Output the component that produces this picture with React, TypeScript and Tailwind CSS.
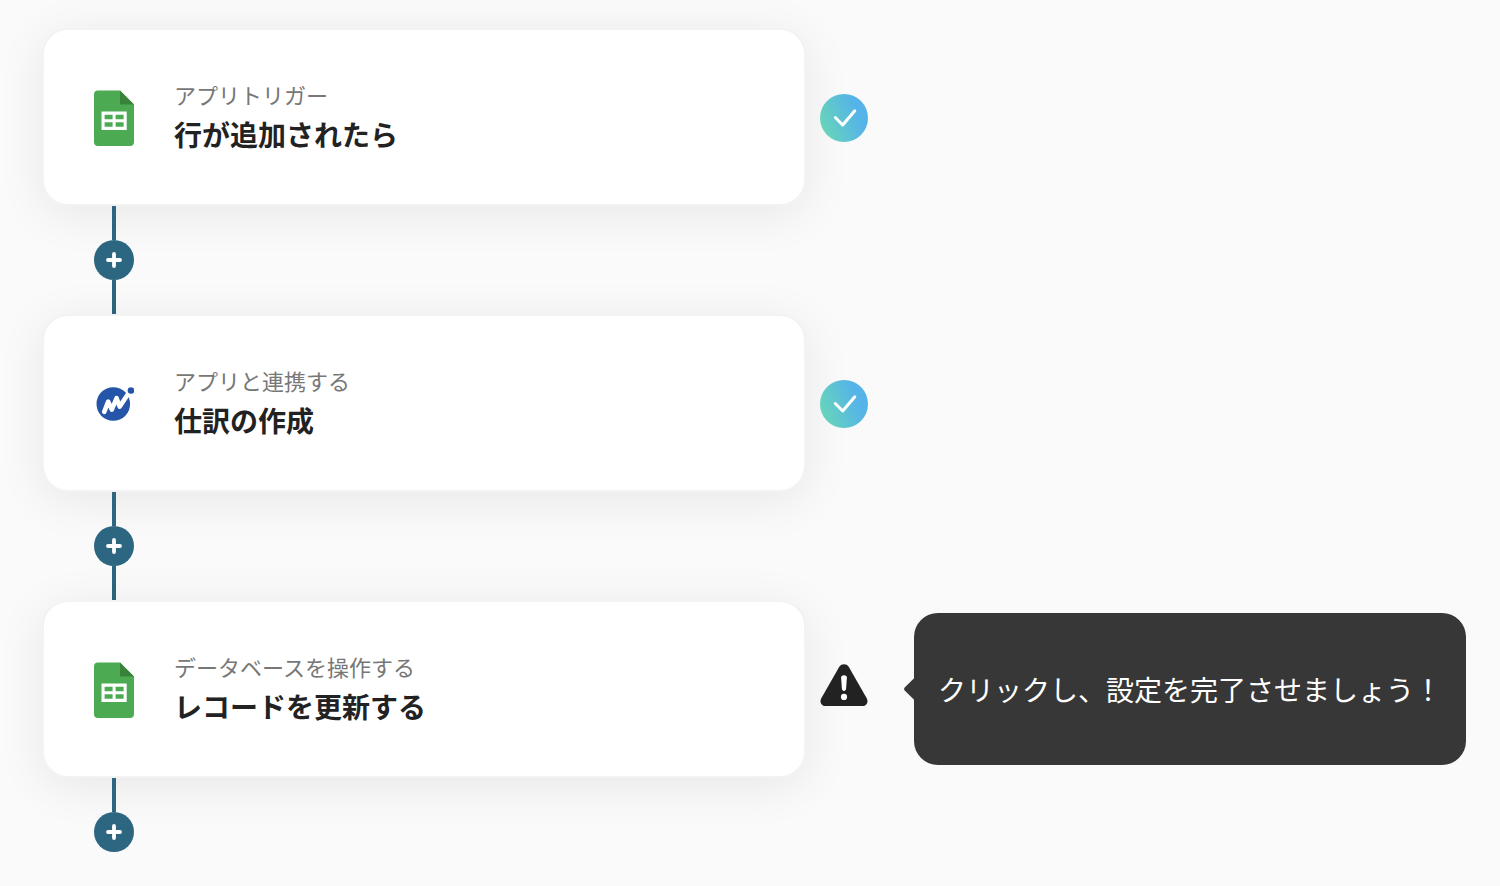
import type { ReactNode } from "react";

type Step = {
  caption: string;
  title: string;
  app: "sheets" | "moneyforward";
  done: boolean;
  hint?: string;
};

const steps: Step[] = [
  {
    caption: "アプリトリガー",
    title: "行が追加されたら",
    app: "sheets",
    done: true,
  },
  {
    caption: "アプリと連携する",
    title: "仕訳の作成",
    app: "moneyforward",
    done: true,
  },
  {
    caption: "データベースを操作する",
    title: "レコードを更新する",
    app: "sheets",
    done: false,
    hint: "クリックし、設定を完了させましょう！",
  },
];

function SheetsIcon() {
  return (
    <svg width="40" height="58" viewBox="0 0 40 58" aria-hidden="true">
      <path
        d="M4 2.500h22l14 14v37.500a4 4 0 0 1-4 4H4a4 4 0 0 1-4-4V6.500a4 4 0 0 1 4-4z"
        fill="#4caa52"
      />
      <path d="M26 2.500l14 14H26z" fill="#398239" />
      <path
        fillRule="evenodd"
        d="M7.500 23.500h25.200V42H7.500zM10.600 26.800v4.500h8v-4.500zM21.600 26.800v4.500h8v-4.500zM10.600 34.200v4.600h8v-4.600zM21.600 34.200v4.600h8v-4.600z"
        fill="#fff"
      />
    </svg>
  );
}

function MoneyForwardIcon() {
  return (
    <svg width="40" height="40" viewBox="0 0 40 40" aria-hidden="true">
      <circle cx="19.300" cy="21" r="16.800" fill="#2455a8" />
      <path
        d="M10.200 28.800L14.200 18.600L17.800 26.600L22.600 15.200L25.600 23.600L34.600 10.200"
        fill="none"
        stroke="#fff"
        strokeWidth="4.600"
        strokeLinecap="round"
        strokeLinejoin="round"
      />
      <circle cx="37" cy="7.500" r="3.300" fill="#2455a8" />
    </svg>
  );
}

function DoneIcon() {
  return (
    <svg width="48" height="50" viewBox="0 0 48 50" aria-hidden="true">
      <defs>
        <linearGradient id="done" x1="0" y1="0.700" x2="1" y2="0.300">
          <stop offset="0" stopColor="#68d6b8" />
          <stop offset="0.750" stopColor="#56b5e6" />
          <stop offset="1" stopColor="#54b2ea" />
        </linearGradient>
      </defs>
      <circle cx="24" cy="26" r="24" fill="url(#done)" />
      <path
        d="M15.300 25.500L22.700 33L34.800 18.800"
        fill="none"
        stroke="#fff"
        strokeWidth="3"
        strokeLinecap="round"
        strokeLinejoin="round"
      />
    </svg>
  );
}

function WarningIcon() {
  return (
    <svg width="48" height="50" viewBox="0 0 48 50" aria-hidden="true">
      <path
        d="M19.300 2.700C21.300 -0.600 26.700 -0.600 28.700 2.700L46.700 34.300C48.700 38 46.700 42 42.500 42H5.500C1.300 42 -0.700 38 1.300 34.300z"
        fill="#222"
      />
      <path
        d="M21.100 13.600c0-3 5.800-3 5.800 0l-.8 11.200c-.2 2.800-4 2.800-4.200 0z"
        fill="#fff"
      />
      <circle cx="24" cy="32.900" r="3.100" fill="#fff" />
    </svg>
  );
}

function Connector({ last }: { last: boolean }) {
  return (
    <div className="ml-[52px] flex w-10 flex-col items-center">
      <div className="h-[34px] w-1 bg-[#2d6680]" />
      <button
        type="button"
        aria-label="追加"
        className="flex size-10 cursor-pointer items-center justify-center rounded-full bg-[#2d6680]"
      >
        <svg width="16" height="16" viewBox="0 0 16 16" aria-hidden="true">
          <path
            d="M8 2v12M2 8h12"
            stroke="#fff"
            strokeWidth="3.800"
            strokeLinecap="round"
          />
        </svg>
      </button>
      {!last && <div className="h-[34px] w-1 bg-[#2d6680]" />}
    </div>
  );
}

function Hint({ children }: { children: ReactNode }) {
  return (
    <div className="relative ml-8 flex min-h-[152px] items-center rounded-3xl bg-[#373737] px-6 text-[28px] leading-10 text-white">
      <span className="absolute top-1/2 -left-[7px] size-[18px] -translate-y-1/2 rotate-45 rounded-xs bg-[#373737]" />
      <p className="relative">{children}</p>
    </div>
  );
}

function StepRow({ step }: { step: Step }) {
  return (
    <div className="grid grid-cols-[minmax(0,764px)_48px_minmax(0,584px)] items-center gap-x-3.5">
      <div className="flex min-h-[178px] items-center gap-10 rounded-[26px] border-2 border-[#f3f3f3] bg-white bg-clip-padding px-[50px] shadow-[0_8px_48px_rgba(0,0,0,0.08)]">
        <div className="w-10 shrink-0">
          {step.app === "sheets" ? <SheetsIcon /> : <MoneyForwardIcon />}
        </div>
        <div className="flex flex-col gap-0.5">
          <p className="text-[22px] leading-8 text-[#777]">{step.caption}</p>
          <h2 className="text-[28px] leading-[44px] font-bold text-[#222]">
            {step.title}
          </h2>
        </div>
      </div>
      {step.done ? <DoneIcon /> : <WarningIcon />}
      {step.hint && <Hint>{step.hint}</Hint>}
    </div>
  );
}

export default function App() {
  return (
    <main className="min-h-screen bg-[#fafafa] py-7 pr-5 pl-[42px] font-['Noto_Sans_CJK_JP',sans-serif]">
      {steps.map((step, i) => (
        <div key={step.title}>
          <StepRow step={step} />
          <Connector last={i === steps.length - 1} />
        </div>
      ))}
    </main>
  );
}
